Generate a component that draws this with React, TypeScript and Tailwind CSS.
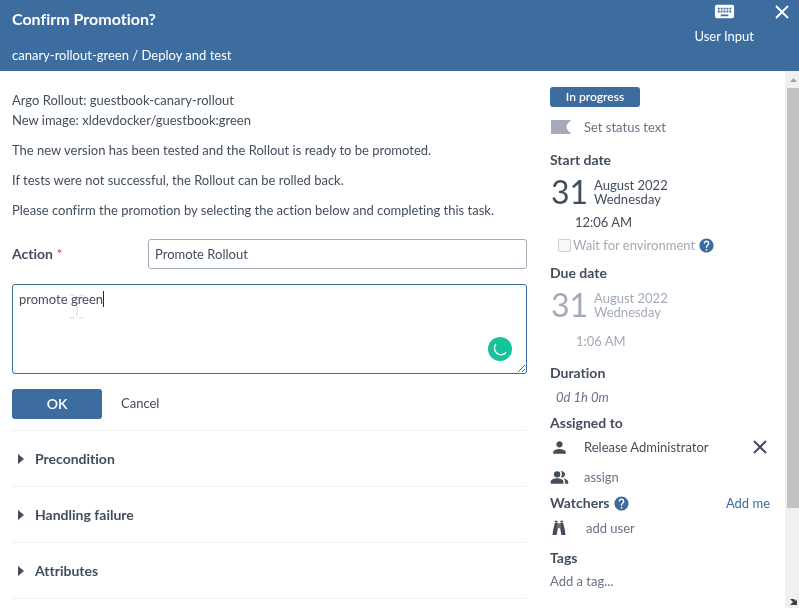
import React from "react";
import { MdHelp, MdKeyboard, MdPeopleAlt, MdPerson } from "react-icons/md";

const body = [
  "The new version has been tested and the Rollout is ready to be promoted.",
  "If tests were not successful, the Rollout can be rolled back.",
  "Please confirm the promotion by selecting the action below and completing this task.",
];

const sections = ["Precondition", "Handling failure", "Attributes"];

function Header() {
  return (
    <header className="flex h-[71px] items-start justify-between bg-[#3d6c9e] pl-3 text-white">
      <div>
        <h1 className="mt-[9px] text-base leading-5 font-bold">Confirm Promotion?</h1>
        <p className="mt-4 leading-5">canary-rollout-green / Deploy and test</p>
      </div>
      <div className="flex items-start">
        <div className="flex flex-col items-center">
          <MdKeyboard className="size-[23px]" />
          <span className="mt-[3px] leading-5">User Input</span>
        </div>
        <button type="button" aria-label="Close" className="mt-0.5 ml-[18px] mr-[7px]">
          <CrossIcon className="size-5" />
        </button>
      </div>
    </header>
  );
}

function CrossIcon({ className }: { className: string }) {
  return (
    <svg viewBox="0 0 20 20" className={className} fill="none" stroke="currentColor" strokeWidth="2">
      <path d="M4 4l12 12M16 4L4 16" />
    </svg>
  );
}

function BinocularsIcon() {
  return (
    <svg viewBox="0 0 14 16" className="h-4 w-[14px]" fill="currentColor" aria-hidden="true">
      <path d="M3 .8h2.600v1.600H3zM8.400.8H11v1.600H8.400z" />
      <path d="M2.800 3h3v5.500L4.600 15H.5l.6-5zM11.200 3h-3v5.500L9.400 15h4.100l-.6-5z" />
      <path d="M6.200 3.200h1.600v5H6.200z" />
    </svg>
  );
}

function DateBlock({ className }: { className: string }) {
  return (
    <div className={"mt-0.5 flex h-10 items-center pl-px " + className}>
      <span className="w-[43px] text-[32px] leading-10">31</span>
      <div className="leading-[14px]">
        <div>August 2022</div>
        <div>Wednesday</div>
      </div>
    </div>
  );
}

function Heading({ children, className }: { children: React.ReactNode; className: string }) {
  return <h2 className={"text-sm leading-5 font-bold " + className}>{children}</h2>;
}

function Sidebar() {
  return (
    <aside className="w-[220px] shrink-0 pt-4 leading-5">
      <div className="w-[90px] rounded-[3px] bg-[#3d6c9e] text-center text-xs leading-5 font-semibold text-white">
        In progress
      </div>
      <div className="mt-2.5 flex items-center text-[#667385]">
        <svg viewBox="0 0 21 14" className="ml-px mr-3 h-[14px] w-[21px]" fill="#a3abb6" aria-hidden="true">
          <path d="M0 0h20v.6q-9 6.400 0 12.800v.6H0z" />
        </svg>
        <span>Set status text</span>
      </div>

      <Heading className="mt-[13px]">Start date</Heading>
      <DateBlock className="" />
      <div className="pl-[25px]">12:06 AM</div>
      <div className="mt-[3px] flex items-center text-[#a3abb6]">
        <input
          id="wait"
          type="checkbox"
          disabled
          className="ml-2 mr-0.5 size-[13px] appearance-none rounded-[2px] border border-[#cfcfcf] bg-[#f9f9f9]"
        />
        <label htmlFor="wait">Wait for environment</label>
        <MdHelp className="ml-[3px] size-[17px] text-[#3d6c9e]" />
      </div>

      <Heading className="mt-2">Due date</Heading>
      <DateBlock className="text-[#a3abb6]" />
      <div className="mt-1.5 pl-[26px] text-[#a3abb6]">1:06 AM</div>

      <Heading className="mt-3">Duration</Heading>
      <div className="mt-1 pl-1.5 text-[#667385] italic">0d 1h 0m</div>

      <Heading className="mt-1.5">Assigned to</Heading>
      <div className="mt-1 flex items-center">
        <MdPerson className="size-[19px]" />
        <span className="ml-[15px] flex-1">Release Administrator</span>
        <button type="button" aria-label="Remove assignee">
          <CrossIcon className="size-5" />
        </button>
      </div>
      <div className="mt-2.5 flex items-center">
        <MdPeopleAlt className="size-[19px]" />
        <span className="ml-[15px] text-[#667385]">assign</span>
      </div>

      <div className="mt-1.5 flex items-center">
        <Heading className="">Watchers</Heading>
        <MdHelp className="ml-[3px] size-[17px] text-[#3d6c9e]" />
        <a href="#add-me" className="ml-auto text-[#3d6c9e]">
          Add me
        </a>
      </div>
      <div className="mt-[5px] flex items-center pl-0.5">
        <BinocularsIcon />
        <span className="ml-5 text-[#667385]">add user</span>
      </div>

      <Heading className="mt-2.5">Tags</Heading>
      <input
        aria-label="Add a tag"
        placeholder="Add a tag..."
        className="mt-[3px] block h-5 w-full bg-transparent placeholder:text-[#667385]"
      />
    </aside>
  );
}

function ScrollRail() {
  return (
    <div className="flex w-[14px] shrink-0 flex-col items-end justify-between bg-[#f0f0f0]" aria-hidden="true">
      <div className="flex w-3 flex-col">
        <svg viewBox="0 0 12 17" className="h-[17px] w-3 shrink-0" fill="#a3a3a3">
          <path d="M3 11l3.500-4 3.500 4z" />
        </svg>
        <div className="h-[420px] bg-[#c1c1c1]" />
      </div>
      <svg viewBox="0 0 12 10" className="h-2.5 w-3 shrink-0" fill="#404040">
        <path d="M3 1h4l2 2 1-2v6H3l3-3z" />
      </svg>
    </div>
  );
}

export default function App() {
  return (
    <div className="flex min-h-screen flex-col bg-white font-['Lato',sans-serif] text-[13px] text-[#434e5c] [font-variant-ligatures:none]">
      <Header />
      <div className="flex flex-1">
        <main className="mr-[23px] min-w-0 flex-1 pt-[19px] pl-3">
          <div className="flex flex-col gap-2.5 leading-5">
            <p>
              Argo Rollout: guestbook-canary-rollout
              <br />
              New image: xldevdocker/guestbook:green
            </p>
            {body.map((text) => (
              <p key={text}>{text}</p>
            ))}
          </div>

          <form onSubmit={(e) => e.preventDefault()}>
            <div className="mt-[19px] flex items-center">
              <label htmlFor="action" className="w-[136px] shrink-0 text-sm font-bold">
                Action <span className="font-normal text-[#e0474c]">*</span>
              </label>
              <input
                id="action"
                defaultValue="Promote Rollout"
                className="h-[30px] min-w-0 flex-1 rounded-[3px] border border-[#a3abb6] px-1.5"
              />
            </div>
            <div className="relative mt-[15px]">
              <textarea
                aria-label="Comment"
                defaultValue="promote green"
                className="block h-[90px] w-full rounded-[3px] border border-[#3d6c9e] px-1.5 py-1 leading-5 outline-none"
              />
              <span className="absolute top-[7px] left-[91px] h-4 w-px bg-[#1f2937]" />
              <svg viewBox="0 0 14 25" className="absolute top-2.5 left-[58px] h-[25px] w-[14px] mix-blend-multiply" fill="none" stroke="#ececec" strokeWidth="2">
                <path d="M0 1h5M9 1h5M7 2v21M0 24h5M9 24h5" />
              </svg>
              <svg viewBox="0 0 24 24" className="absolute right-[15px] bottom-[13px] size-6">
                <circle cx="12" cy="12" r="12" fill="#15c39a" />
                <path d="M8 7a6.300 6.300 0 1 0 10 8.500" fill="none" stroke="#fff" strokeWidth="1.400" />
              </svg>
            </div>
            <div className="mt-[15px] flex h-[30px]">
              <button type="submit" className="w-[90px] rounded-[3px] bg-[#3d6c9e] text-sm font-semibold text-white">
                OK
              </button>
              <button type="button" className="ml-[19px]">
                Cancel
              </button>
            </div>
          </form>

          <div className="mt-[11px] border-b border-[#f0f1f2]">
            {sections.map((title) => (
              <button
                key={title}
                type="button"
                className="flex h-14 w-full items-center border-t border-[#f0f1f2] pl-[6px] text-sm font-bold"
              >
                <svg viewBox="0 0 6 10" className="mr-[11px] h-2.5 w-1.5" fill="currentColor" aria-hidden="true">
                  <path d="M0 0l6 5-6 5z" />
                </svg>
                {title}
              </button>
            ))}
          </div>
        </main>
        <div className="pr-[15px]">
          <Sidebar />
        </div>
        <ScrollRail />
      </div>
    </div>
  );
}
